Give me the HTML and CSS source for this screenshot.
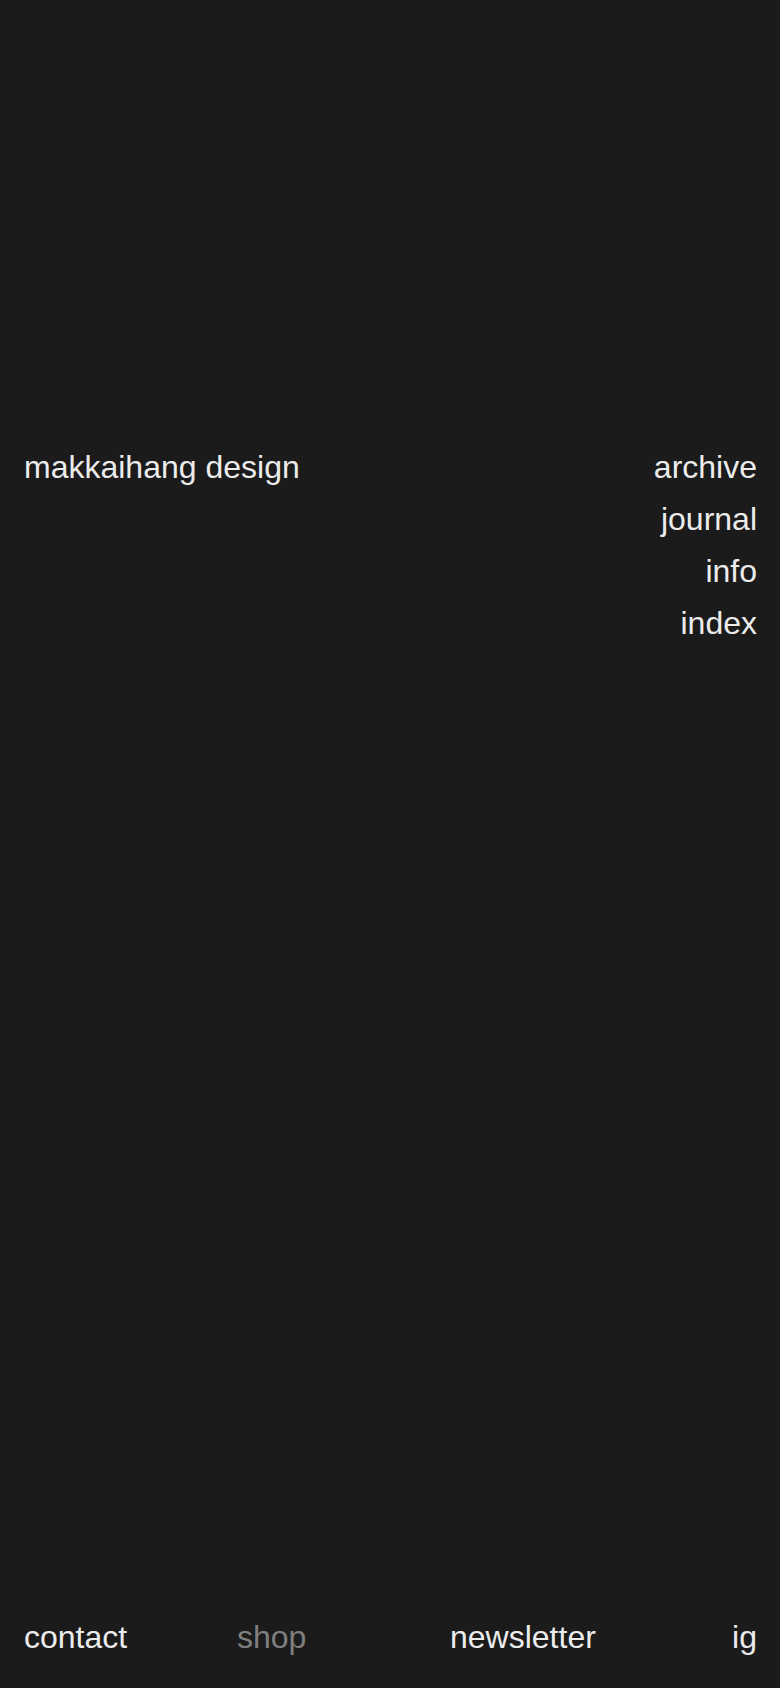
FILE: index.html
```html
<!DOCTYPE html>
<html>
<head>
<meta name="viewport" content="width=device-width, initial-scale=1.0">
<link rel="stylesheet" href="styles.css">
</head>
<body>
  <div class="page">
    <header class="top">
      <a class="brand" href="#">makkaihang design</a>
      <nav class="menu">
        <a href="#">archive</a>
        <a href="#">journal</a>
        <a href="#">info</a>
        <a href="#">index</a>
      </nav>
    </header>
    <footer class="bottom">
      <a href="#">contact</a>
      <a class="muted" href="#">shop</a>
      <a href="#">newsletter</a>
      <a class="end" href="#">ig</a>
    </footer>
  </div>
</body>
</html>
```

FILE: styles.css
```css
* {box-sizing: border-box;}

html, body {
  margin: 0;
  padding: 0;
  background-color: #1b1b1b;
}

body {
  font-family: "Liberation Sans", Arial, sans-serif;
  font-size: 32px;
  line-height: 52px;
  color: #ececec;
}

a {
  color: inherit;
  text-decoration: none;
}

.page {
  display: flex;
  flex-direction: column;
  min-height: 100vh;
  padding: 0 23px 25px 24px;
}

.top {
  display: flex;
  justify-content: space-between;
  align-items: flex-start;
  padding-top: 441px;
}

.menu {
  display: flex;
  flex-direction: column;
  align-items: flex-end;
}

.bottom {
  margin-top: auto;
  display: grid;
  grid-template-columns: 213px 213px 1fr auto;
}

.bottom .muted {
  color: #7f7f7f;
}

.bottom .end {
  text-align: right;
}
```
